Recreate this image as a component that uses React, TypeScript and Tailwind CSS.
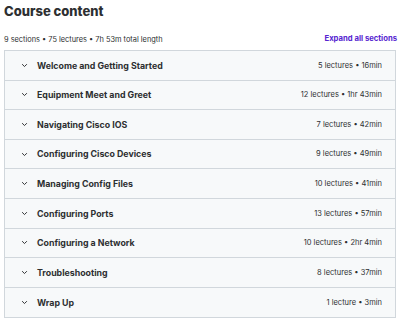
const sections = [
  { title: "Welcome and Getting Started", meta: "5 lectures • 16min" },
  { title: "Equipment Meet and Greet", meta: "12 lectures • 1hr 43min" },
  { title: "Navigating Cisco IOS", meta: "7 lectures • 42min" },
  { title: "Configuring Cisco Devices", meta: "9 lectures • 49min" },
  { title: "Managing Config Files", meta: "10 lectures • 41min" },
  { title: "Configuring Ports", meta: "13 lectures • 57min" },
  { title: "Configuring a Network", meta: "10 lectures • 2hr 4min" },
  { title: "Troubleshooting", meta: "8 lectures • 37min" },
  { title: "Wrap Up", meta: "1 lecture • 3min" },
]

function Chevron() {
  return (
    <svg className="w-[7px] h-[7px] text-[#2d2f31]" viewBox="0 0 10 10" fill="none" stroke="currentColor">
      <path d="M2 3.5l3 3 3-3" strokeWidth={1.4} strokeLinecap="round" strokeLinejoin="round" />
    </svg>
  )
}

export default function App() {
  return (
    <div className="w-[400px] h-[321px] bg-white px-[4px] pt-[1px] text-[#2d2f31] font-['Inter',sans-serif] overflow-hidden">
      <h2 className="text-[13px] leading-[21px] font-extrabold">Course content</h2>
      <div className="flex items-end justify-between mt-[10px] h-[18px] pb-[5px]">
        <span className="text-[7.4px] text-[#2d2f31]">9 sections • 75 lectures • 7h 53m total length</span>
        <button className="text-[7.7px] font-bold text-[#5624d0] mr-[-1px]">Expand all sections</button>
      </div>
      <div className="border border-[#d1d7dc] w-[392px]">
        {sections.map((s, i) => (
          <div
            key={s.title}
            className={`flex items-center justify-between h-[29.6px] bg-[#f7f9fa] pl-[16px] pr-[13px] ${i < sections.length - 1 ? "border-b border-[#d1d7dc]" : ""}`}
          >
            <div className="flex items-center gap-[9px]">
              <Chevron />
              <span className="text-[8.8px] font-bold">{s.title}</span>
            </div>
            <span className="text-[7.5px] text-[#2d2f31]">{s.meta}</span>
          </div>
        ))}
      </div>
    </div>
  )
}
